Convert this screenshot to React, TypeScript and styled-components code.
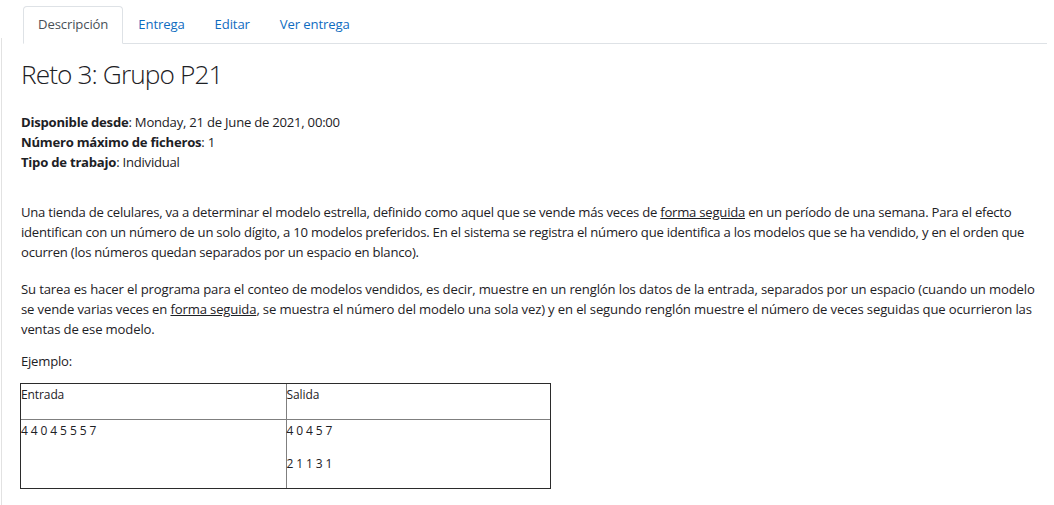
import React from "react";
import styled, { createGlobalStyle } from "styled-components";

const GlobalStyle = createGlobalStyle`
  html, body {
    margin: 0;
    padding: 0;
    background: #ffffff;
  }
  body {
    font-family: "Open Sans", "Noto Sans", sans-serif;
    font-size: 13.125px;
    line-height: 1.5;
    letter-spacing: -0.24px;
    color: #1d2125;
  }
`;

const Page = styled.div`
  padding-top: 6px;
`;

const TabBar = styled.ul`
  display: flex;
  list-style: none;
  margin: 0 7px 0 23px;
  padding: 0;
  border-bottom: 1px solid #dee2e6;
`;

const Tab = styled.li<{ $active?: boolean }>`
  margin-bottom: -1px;
  padding: 8px 14px;
  border: 1px solid transparent;
  border-top-left-radius: 4px;
  border-top-right-radius: 4px;
  color: #0f6cbf;
  letter-spacing: -0.12px;
  cursor: pointer;
  ${(p) =>
    p.$active &&
    `
    color: #495057;
    background: #ffffff;
    border-color: #dee2e6 #dee2e6 #ffffff;
  `}
`;

const Body = styled.div`
  margin-top: -6px;
  margin-left: 1px;
  padding: 6px 9px 0 19px;
  border-left: 1px solid #e2e2e2;
  min-height: 480px;
`;

const Title = styled.h2`
  margin: 15px 0 0;
  font-size: 26.25px;
  font-weight: 300;
  line-height: 1.2;
  letter-spacing: -0.9px;
`;

const Dates = styled.div`
  margin-top: 23px;
  display: flex;
  flex-direction: column;
`;

const DateRow = styled.div``;

const Label = styled.strong`
  font-weight: 700;
`;

const Intro = styled.div`
  margin-top: 31px;
`;

const Para = styled.p<{ $gap?: number; $track?: number }>`
  margin: ${(p) => p.$gap ?? 0}px 0 0;
  ${(p) => (p.$track !== undefined ? `letter-spacing: ${p.$track}px;` : "")}
`;

const Under = styled.span`
  text-decoration: underline;
`;

const Sample = styled.table`
  margin: 11px 0 0 -1px;
  width: 531px;
  border: 1px solid #2b2b2b;
  border-spacing: 0;
  table-layout: fixed;
`;

const Cell = styled.td<{ $first?: boolean; $lower?: boolean }>`
  vertical-align: top;
  padding: 1px 1px 0 0;
  font-size: 12px;
  line-height: 19.7px;
  letter-spacing: -0.1px;
  border-left: ${(p) => (p.$first ? "none" : "1px solid #7f7f7f")};
  border-top: ${(p) => (p.$lower ? "1px solid #7f7f7f" : "none")};
`;

const CellText = styled.p`
  margin: 0 0 14px;
`;

const tabs = ["Descripción", "Entrega", "Editar", "Ver entrega"];

export default function App() {
  return (
    <>
      <GlobalStyle />
      <Page>
        <TabBar>
          {tabs.map((t, i) => (
            <Tab key={t} $active={i === 0}>
              {t}
            </Tab>
          ))}
        </TabBar>
        <Body>
          <Title>Reto 3: Grupo P21</Title>
          <Dates>
            <DateRow>
              <Label>Disponible desde</Label>: Monday, 21 de June de 2021, 00:00
            </DateRow>
            <DateRow>
              <Label>Número máximo de ficheros</Label>: 1
            </DateRow>
            <DateRow>
              <Label>Tipo de trabajo</Label>: Individual
            </DateRow>
          </Dates>
          <Intro>
            <Para>
              Una tienda de celulares, va a determinar el modelo estrella, definido como aquel que se vende más veces de{" "}
              <Under>forma seguida</Under> en un período de una semana. Para el efecto identifican con un número de un solo
              dígito, a 10 modelos preferidos. En el sistema se registra el número que identifica a los modelos que se ha
              vendido, y en el orden que ocurren (los números quedan separados por un espacio en blanco).
            </Para>
            <Para $gap={18} $track={-0.15}>
              Su tarea es hacer el programa para el conteo de modelos vendidos, es decir, muestre en un renglón los datos de
              la entrada, separados por un espacio (cuando un modelo se vende varias veces en <Under>forma seguida</Under>,
              se muestra el número del modelo una sola vez) y en el segundo renglón muestre el número de veces seguidas que
              ocurrieron las ventas de ese modelo.
            </Para>
            <Para $gap={13}>Ejemplo:</Para>
            <Sample>
              <tbody>
                <tr>
                  <Cell $first>
                    <CellText>Entrada</CellText>
                  </Cell>
                  <Cell>
                    <CellText>Salida</CellText>
                  </Cell>
                </tr>
                <tr>
                  <Cell $first $lower>
                    <CellText>4 4 0 4 5 5 5 7</CellText>
                  </Cell>
                  <Cell $lower>
                    <CellText>4 0 4 5 7</CellText>
                    <CellText>2 1 1 3 1</CellText>
                  </Cell>
                </tr>
              </tbody>
            </Sample>
          </Intro>
        </Body>
      </Page>
    </>
  );
}
